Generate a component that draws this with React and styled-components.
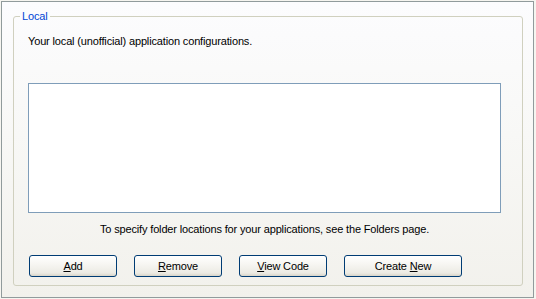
import React from "react";
import styled, { createGlobalStyle } from "styled-components";

const Global = createGlobalStyle`
  html, body { margin: 0; padding: 0; background: #f6f5f0; }
  body { width: 536px; height: 299px; overflow: hidden; font-family: Tahoma, "Liberation Sans", Arial, sans-serif; font-size: 11px; letter-spacing: -0.15px; color: #000; }
`;

const Frame = styled.div`
  box-sizing: border-box;
  margin: 1px;
  width: 533px;
  height: 297px;
  border: 1px solid #919b9c;
  background: linear-gradient(to bottom, #fcfcfe 0%, #f8f8f6 45%, #f2f1ec 100%);
  padding: 8px 10px 11px 11px;
  display: flex;
`;

const Group = styled.fieldset`
  flex: 1;
  margin: 0;
  padding: 0 21px 8px 14px;
  border: 1px solid #d0d0bf;
  border-radius: 3px;
  display: flex;
  flex-direction: column;
  min-width: 0;
`;

const Legend = styled.legend`
  margin-left: -8px;
  padding: 0 2px;
  color: #0046d5;
  line-height: 13px;
`;

const Text = styled.div`
  line-height: 13px;
  margin-top: ${(p) => p.$top || 0}px;
  text-align: ${(p) => (p.$center ? "center" : "left")};
  width: 473px;
`;

const ListBox = styled.div`
  box-sizing: border-box;
  height: 130px;
  width: 473px;
  margin-top: 35px;
  border: 1px solid #7f9db9;
  background: #fff;
`;

const Buttons = styled.div`
  display: flex;
  gap: 17px;
  margin-top: auto;
  padding-left: 1px;
`;

const Button = styled.button`
  box-sizing: border-box;
  width: ${(p) => p.$w || 88}px;
  height: 22px;
  padding: 0;
  border: 1px solid #003c74;
  border-radius: 3px;
  background: linear-gradient(to bottom, #ffffff 0%, #f7f6f2 40%, #ecebe4 85%, #d8d4c8 100%);
  font-family: inherit;
  font-size: 11px;
  letter-spacing: inherit;
  color: #000;
  line-height: 13px;
`;

const U = styled.span`
  text-decoration: underline;
`;

export default function App() {
  return (
    <>
      <Global />
      <Frame>
        <Group>
          <Legend>Local</Legend>
          <Text $top={12}>Your local (unofficial) application configurations.</Text>
          <ListBox />
          <Text $top={10} $center>
            To specify folder locations for your applications, see the Folders page.
          </Text>
          <Buttons>
            <Button><U>A</U>dd</Button>
            <Button><U>R</U>emove</Button>
            <Button><U>V</U>iew Code</Button>
            <Button $w={118}>Create <U>N</U>ew</Button>
          </Buttons>
        </Group>
      </Frame>
    </>
  );
}
